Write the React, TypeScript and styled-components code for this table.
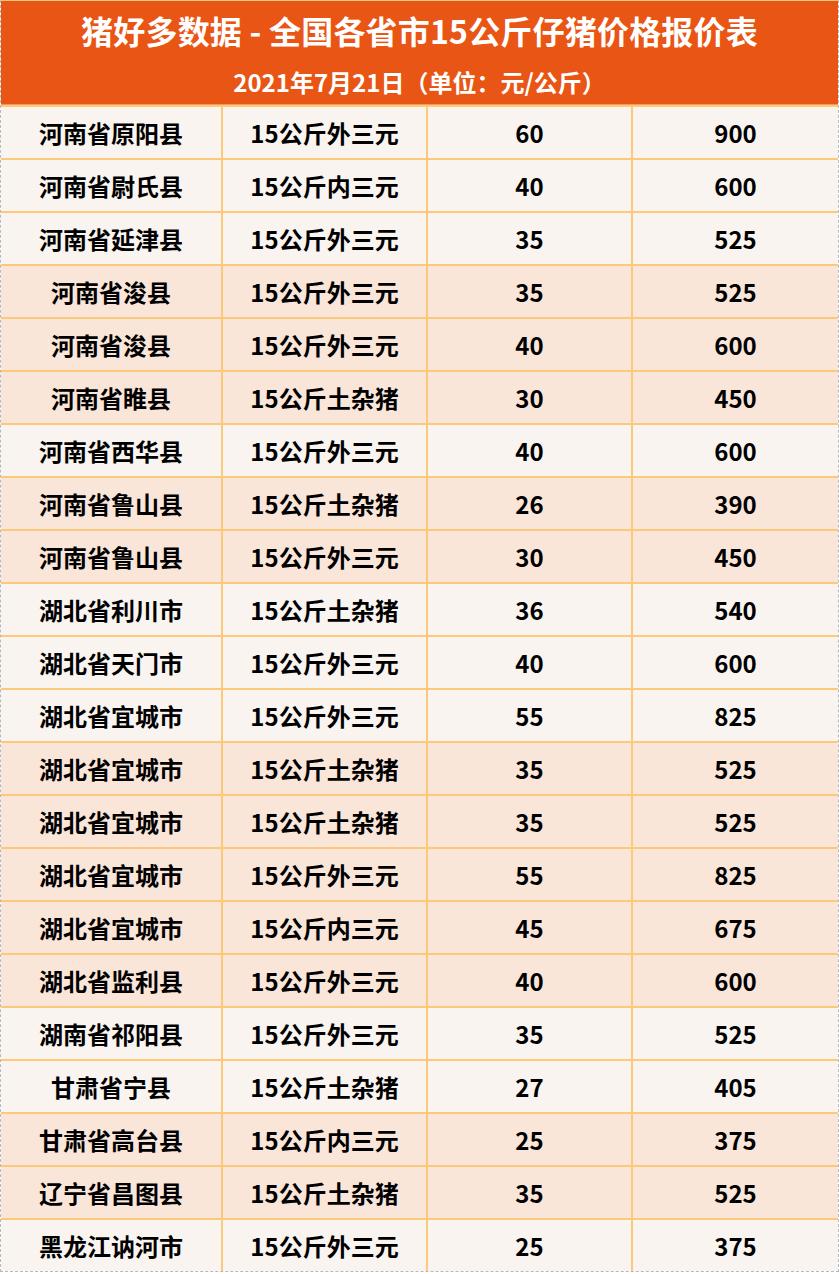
import styled, {createGlobalStyle} from "styled-components";

const GlobalStyle = createGlobalStyle`
    body {
        margin: 0;
        background: #ffffff;
        font-family: "Noto Sans CJK SC", "Noto Sans", sans-serif;
    }
`

const StyledPage = styled.div`
    width: 839px;
    box-sizing: border-box;
    border-top: 1px solid #f8c97a;
    border-left: 1px dashed #b8b8b8;
    border-right: 1px dashed #b8b8b8;
    border-bottom: 1px dashed #b8b8b8;
`

/*Orange banner with the title and the date line*/
const StyledHeader = styled.header`
    height: 104px;
    background: #e95514;
    color: #ffffff;
    display: flex;
    flex-direction: column;
    align-items: center;
    box-sizing: border-box;
    padding-top: 7px;
    border-bottom: 1px solid #f29a5c;
`

const StyledTitle = styled.h1`
    margin: 0;
    font-size: 32px;
    line-height: 44px;
    font-weight: 700;
    letter-spacing: 0.2px;
`

const StyledSubtitle = styled.h2`
    margin: 15px 0 0;
    font-size: 24px;
    line-height: 30px;
    font-weight: 700;
`

const StyledTable = styled.div`
    display: grid;
    grid-template-columns: 220px 203px 203px 1fr;
    gap: 2px;
    padding-top: 2px;
    background: #fcc97a;
`

const StyledCell = styled.div<{ $peach: boolean }>`
    height: 51px;
    display: flex;
    align-items: center;
    justify-content: center;
    background: ${(p) => (p.$peach ? "#fae5d9" : "#f9f4f0")};
    color: #000000;
    font-size: 24px;
    font-weight: 700;
`

type Row = [string, string, number, number, boolean];

const rows: Row[] = [
    ["河南省原阳县", "15公斤外三元", 60, 900, false],
    ["河南省尉氏县", "15公斤内三元", 40, 600, false],
    ["河南省延津县", "15公斤外三元", 35, 525, false],
    ["河南省浚县", "15公斤外三元", 35, 525, true],
    ["河南省浚县", "15公斤外三元", 40, 600, true],
    ["河南省睢县", "15公斤土杂猪", 30, 450, true],
    ["河南省西华县", "15公斤外三元", 40, 600, false],
    ["河南省鲁山县", "15公斤土杂猪", 26, 390, true],
    ["河南省鲁山县", "15公斤外三元", 30, 450, true],
    ["湖北省利川市", "15公斤土杂猪", 36, 540, false],
    ["湖北省天门市", "15公斤外三元", 40, 600, false],
    ["湖北省宜城市", "15公斤外三元", 55, 825, false],
    ["湖北省宜城市", "15公斤土杂猪", 35, 525, true],
    ["湖北省宜城市", "15公斤土杂猪", 35, 525, true],
    ["湖北省宜城市", "15公斤外三元", 55, 825, true],
    ["湖北省宜城市", "15公斤内三元", 45, 675, true],
    ["湖北省监利县", "15公斤外三元", 40, 600, true],
    ["湖南省祁阳县", "15公斤外三元", 35, 525, false],
    ["甘肃省宁县", "15公斤土杂猪", 27, 405, false],
    ["甘肃省高台县", "15公斤内三元", 25, 375, true],
    ["辽宁省昌图县", "15公斤土杂猪", 35, 525, true],
    ["黑龙江讷河市", "15公斤外三元", 25, 375, false],
];

export default function App() {
    return (
        <StyledPage>
            <GlobalStyle/>
            <StyledHeader>
                <StyledTitle>猪好多数据 - 全国各省市15公斤仔猪价格报价表</StyledTitle>
                <StyledSubtitle>2021年7月21日（单位：元/公斤）</StyledSubtitle>
            </StyledHeader>
            <StyledTable>
                {rows.map(([place, kind, perKg, total, peach], i) => [
                    <StyledCell key={i + "a"} $peach={peach}>{place}</StyledCell>,
                    <StyledCell key={i + "b"} $peach={peach}>{kind}</StyledCell>,
                    <StyledCell key={i + "c"} $peach={peach}>{perKg}</StyledCell>,
                    <StyledCell key={i + "d"} $peach={peach}>{total}</StyledCell>,
                ])}
            </StyledTable>
        </StyledPage>
    );
}
